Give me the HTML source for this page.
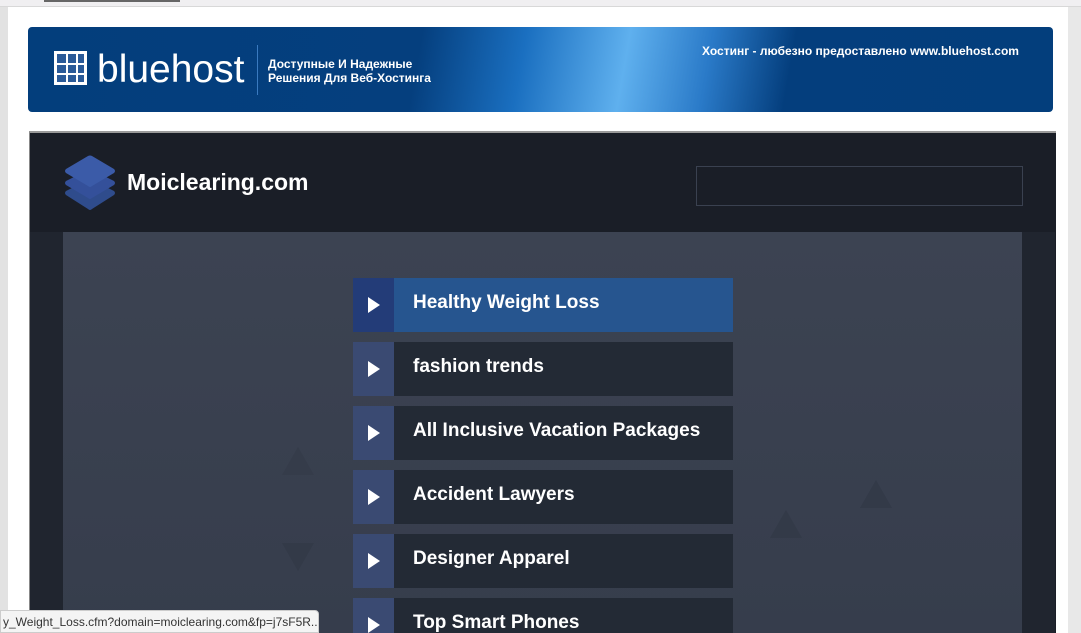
<!DOCTYPE html>
<html style="overflow:hidden;width:1081px;height:633px"><head><meta charset="utf-8"><style>
*{margin:0;padding:0;box-sizing:border-box}
body{width:1081px;height:633px;overflow:hidden;background:#fff;font-family:"Liberation Sans",sans-serif;position:relative}
.topbar{position:absolute;left:0;top:0;width:1081px;height:7px;background:#f0eff1;border-bottom:1px solid #d8d8d8}
.tab{position:absolute;left:44px;top:0;width:136px;height:2px;background:#666}
.leftbar{position:absolute;left:0;top:7px;width:8px;height:626px;background:#e2e2e2}
.scroll{position:absolute;left:1068px;top:7px;width:13px;height:626px;background:#e8e8e8}
.banner{position:absolute;left:28px;top:27px;width:1025px;height:85px;border-radius:4px;overflow:hidden;
background:linear-gradient(100deg,#033e7c 0%,#053f7e 38%,#1a6fc0 48%,#5fb0ee 58%,#2a7ac8 66%,#043e7d 74%,#033e7c 100%)}
.logo{position:absolute;left:54px;top:51px;width:33px;height:34px;border:3px solid #fff;background:
linear-gradient(#fff,#fff) 9px 0/2px 100% no-repeat,linear-gradient(#fff,#fff) 19px 0/2px 100% no-repeat,
linear-gradient(#fff,#fff) 0 9px/100% 2px no-repeat,linear-gradient(#fff,#fff) 0 19px/100% 2px no-repeat,#2a5a98}
.bh{position:absolute;left:97px;top:47px;color:#fff;font-size:39px;line-height:46px}
.sep{position:absolute;left:257px;top:45px;width:1px;height:50px;background:#3a7ac0}
.tag{position:absolute;left:268px;top:57px;color:#fff;font-size:12px;font-weight:bold;line-height:14px}
.host{position:absolute;left:702px;top:44px;color:#fff;font-size:12px;font-weight:bold}
.box{position:absolute;left:29px;top:131px;width:1027px;height:502px;background:#1a1e27;border-top:2px solid #9a9a9a;border-left:1px solid #888}
.stack{position:absolute;left:62px;top:153px}
.title{position:absolute;left:127px;top:169px;color:#fff;font-size:23px;font-weight:bold}
.search{position:absolute;left:696px;top:166px;width:327px;height:40px;border:1px solid #3a4150}
.content{position:absolute;left:30px;top:232px;width:1025px;height:401px;background:#20252f}
.inner{position:absolute;left:63px;top:232px;width:959px;height:401px;background:linear-gradient(#3c4352,#363d4c)}
.item{position:absolute;left:353px;width:380px;height:54px;background:#232a35;overflow:hidden}
.item .a{position:absolute;left:0;top:0;width:41px;height:54px;background:#3a4a72}
.item .a:after{content:"";position:absolute;left:15px;top:19px;border-left:12px solid #fff;border-top:8px solid transparent;border-bottom:8px solid transparent}
.item span{position:absolute;left:60px;top:14px;color:#fff;font-size:19px;font-weight:bold;white-space:nowrap}
.item.h{background:#26558f}.item.h .a{background:#233c78}
.status{position:absolute;left:0;top:610px;width:319px;height:23px;background:#f4f4f4;border:1px solid #ccc;border-radius:0 4px 0 0;font-size:12px;color:#333;padding:4px 0 0 2px;white-space:nowrap;overflow:hidden;z-index:2}
.tri{position:absolute;width:0;height:0;border-left:16px solid transparent;border-right:16px solid transparent}
</style></head><body>
<div class="topbar"><div class="tab"></div></div>
<div class="leftbar"></div>
<div class="scroll"></div>
<div class="banner"></div>
<div class="logo"></div>
<div class="bh">blue<span>host</span></div>
<div class="sep"></div>
<div class="tag">Доступные И Надежные<br>Решения Для Веб-Хостинга</div>
<div class="host">Хостинг - любезно предоставлено www.bluehost.com</div>
<div class="box"></div>
<svg class="stack" width="56" height="62" viewBox="0 0 56 62">
<path d="M4 42 Q2 40 4 38 L26 27 Q28 26 30 27 L52 38 Q54 40 52 42 L30 56 Q28 58 26 56 Z" fill="#2f4c8c"/>
<path d="M4 32 Q2 30 4 28 L26 17 Q28 16 30 17 L52 28 Q54 30 52 32 L30 45 Q28 47 26 45 Z" fill="#34509a"/>
<path d="M4 20 Q2 18 4 16 L26 3 Q28 2 30 3 L52 16 Q54 18 52 20 L30 33 Q28 35 26 33 Z" fill="#3b5ba8"/>
</svg>
<div class="title">Moiclearing.com</div>
<div class="search"></div>
<div class="content"></div>
<div class="inner"></div>
<div class="tri" style="left:282px;top:447px;border-bottom:28px solid #353c4a"></div>
<div class="tri" style="left:282px;top:543px;border-top:28px solid #333a48"></div>
<div class="tri" style="left:770px;top:510px;border-bottom:28px solid #333a48"></div>
<div class="tri" style="left:860px;top:480px;border-bottom:28px solid #333a48"></div>
<div class="item h" style="top:278px"><div class="a"></div><span>Healthy Weight Loss</span></div>
<div class="item" style="top:342px"><div class="a"></div><span>fashion trends</span></div>
<div class="item" style="top:406px"><div class="a"></div><span>All Inclusive Vacation Packages</span></div>
<div class="item" style="top:470px"><div class="a"></div><span>Accident Lawyers</span></div>
<div class="item" style="top:534px"><div class="a"></div><span>Designer Apparel</span></div>
<div class="item" style="top:598px;height:35px"><div class="a"></div><span>Top Smart Phones</span></div>
<div class="status">y_Weight_Loss.cfm?domain=moiclearing.com&amp;fp=j7sF5R...</div>
</body></html>
